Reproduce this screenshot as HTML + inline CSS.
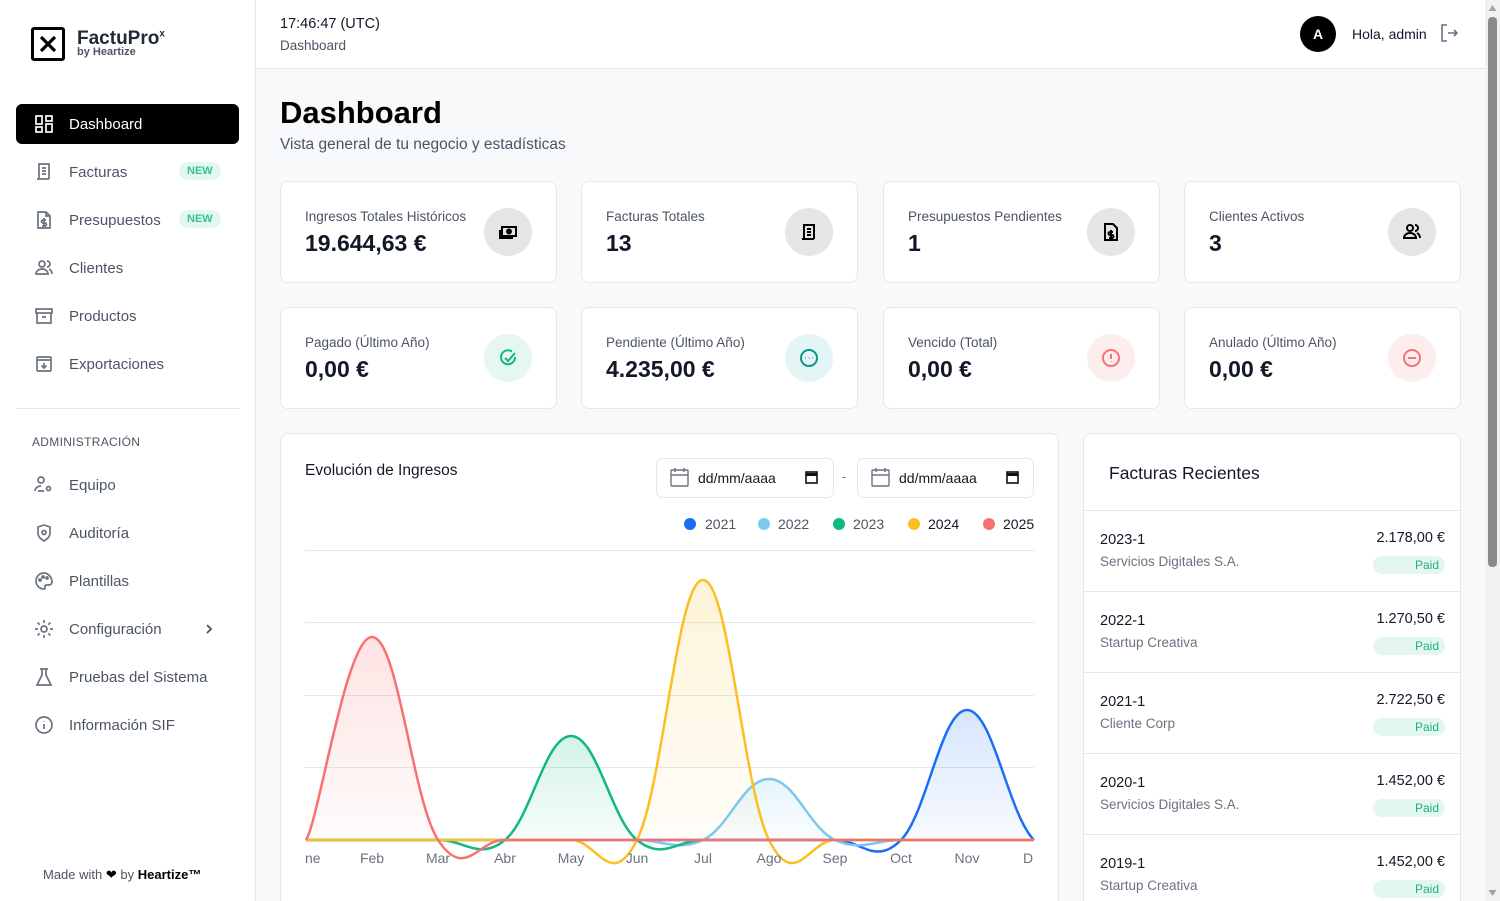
<!DOCTYPE html>
<html><head><meta charset="utf-8"><style>
*{box-sizing:border-box;margin:0;padding:0}
html{width:1500px;height:901px;overflow:hidden}
body{width:1500px;height:901px;overflow:hidden;background:#f8f9fb;font-family:"Liberation Sans",sans-serif;color:#1f2937;position:relative}
.abs{position:absolute}
.side{left:0;top:0;width:256px;height:901px;background:#fff;border-right:1px solid #e5e7eb}
.nav{position:absolute;left:16px;width:223px;height:40px;border-radius:6px;display:flex;align-items:center;padding-left:18px;font-size:15px;color:#4b5563}
.nav svg{width:20px;height:20px;margin-right:15px;stroke:#6b7280;fill:none;stroke-width:1.7}
.nav.act{background:#000;color:#fff}
.nav.act svg{stroke:#fff}
.new{position:absolute;left:163px;top:10px;background:#e3f7ee;color:#34c38f;font-size:11px;font-weight:bold;border-radius:10px;padding:3px 8px}
.card{position:absolute;background:#fff;border:1px solid #e5e7eb;border-radius:8px;width:277px;height:102px}
.card .l{position:absolute;left:24px;top:27px;font-size:13.5px;color:#4b5563}
.card .v{position:absolute;left:24px;top:48px;font-size:23px;font-weight:bold;color:#111827}
.card .ic{position:absolute;right:24px;top:26px;width:48px;height:48px;border-radius:50%;background:#e5e5e5;display:flex;align-items:center;justify-content:center}
.card .ic svg{width:20px;height:20px;fill:none;stroke-width:2}
.row{position:absolute;left:0;width:377px;height:81px;border-top:1px solid #e5e7eb}
.row .n{position:absolute;left:16px;top:21px;font-size:14.5px;color:#111827}
.row .c{position:absolute;left:16px;top:43px;font-size:13.5px;color:#6b7280}
.row .a{position:absolute;right:16px;top:19px;font-size:14.5px;color:#111827}
.row .p{position:absolute;right:16px;top:45px;width:72px;height:18px;border-radius:9px;background:#e3f7ee;color:#20b07c;font-size:12px;text-align:right;padding-right:6px;line-height:18px}
</style></head><body>

<div class="abs side">
 <div class="abs" style="left:31px;top:27px;width:34px;height:34px;border:3px solid #000;border-radius:3px"></div>
 <svg class="abs" style="left:31px;top:27px" width="34" height="34"><path d="M10 10L24 24M24 10L10 24" stroke="#000" stroke-width="3.2"/></svg>
 <div class="abs" style="left:77px;top:28px;font-size:19px;font-weight:bold;color:#1f2937">FactuPro<sup style="font-size:10px">x</sup></div>
 <div class="abs" style="left:77px;top:46px;font-size:11px;font-weight:bold;color:#4b5563">by Heartize</div>

 <div class="nav act" style="top:104px"><svg viewBox="0 0 20 20"><rect x="2" y="2" width="6" height="8"/><rect x="12" y="2" width="6" height="5"/><rect x="2" y="13" width="6" height="5"/><rect x="12" y="10" width="6" height="8"/></svg>Dashboard</div>
 <div class="nav" style="top:152px"><svg viewBox="0 0 20 20"><path d="M5 17V2h10v15M3 17h12M8 6h4M8 9h4M8 12h4"/></svg>Facturas<span class="new">NEW</span></div>
 <div class="nav" style="top:200px"><svg viewBox="0 0 20 20"><path d="M4 2h8l4 4v12H4zM12 2v4h4M10 8v8M12 10H9a1.5 1.5 0 000 3h2a1.5 1.5 0 010 3H8"/></svg>Presupuestos<span class="new">NEW</span></div>
 <div class="nav" style="top:248px"><svg viewBox="0 0 20 20"><circle cx="8" cy="6" r="3"/><path d="M2 16c0-3 3-5 6-5s6 2 6 5zM13 3a3 3 0 010 6M15 11c2 1 3 3 3 5"/></svg>Clientes</div>
 <div class="nav" style="top:296px"><svg viewBox="0 0 20 20"><rect x="2" y="3" width="16" height="4"/><path d="M3 7v10h14V7M8 11h4"/></svg>Productos</div>
 <div class="nav" style="top:344px"><svg viewBox="0 0 20 20"><rect x="3" y="3" width="14" height="14" rx="1"/><path d="M3 6h14M10 9v5M7.5 11.5L10 14l2.5-2.5"/></svg>Exportaciones</div>
 <div class="abs" style="left:16px;top:408px;width:223px;border-top:1px solid #e5e7eb"></div>
 <div class="abs" style="left:32px;top:435px;font-size:12px;color:#4b5563;letter-spacing:.3px">ADMINISTRACIÓN</div>
 <div class="nav" style="top:465px"><svg viewBox="0 0 20 20"><circle cx="7" cy="5" r="3"/><path d="M1 16c0-3 3-5 6-5M4 16h6"/><circle cx="14.5" cy="13.5" r="2"/></svg>Equipo</div>
 <div class="nav" style="top:513px"><svg viewBox="0 0 20 20"><path d="M10 2l6 2v6c0 4-3 6-6 8-3-2-6-4-6-8V4z"/><circle cx="10" cy="9.5" r="2"/></svg>Auditoría</div>
 <div class="nav" style="top:561px"><svg viewBox="0 0 20 20"><path d="M10 2a8 8 0 000 16c1 0 1.5-1 1-2s0-2 1.5-2H15a3 3 0 003-3c0-5-4-9-8-9z"/><circle cx="6" cy="9" r="1"/><circle cx="9" cy="6" r="1"/><circle cx="13" cy="7" r="1"/></svg>Plantillas</div>
 <div class="nav" style="top:609px"><svg viewBox="0 0 20 20"><circle cx="10" cy="10" r="3"/><path d="M10 1v3M10 16v3M1 10h3M16 10h3M3.6 3.6l2.1 2.1M14.3 14.3l2.1 2.1M3.6 16.4l2.1-2.1M14.3 5.7l2.1-2.1"/></svg>Configuración<svg style="position:absolute;left:186px;top:13px;width:14px;height:14px" viewBox="0 0 14 14"><path d="M5 3l4 4-4 4" stroke="#4b5563" stroke-width="1.8"/></svg></div>
 <div class="nav" style="top:657px"><svg viewBox="0 0 20 20"><path d="M6 2h8M8 2v6l-5 10h14l-5-10V2"/></svg>Pruebas del Sistema</div>
 <div class="nav" style="top:705px"><svg viewBox="0 0 20 20"><circle cx="10" cy="10" r="8"/><path d="M10 9v5M10 6v.5"/></svg>Información SIF</div>
 <div class="abs" style="left:43px;top:867px;font-size:13px;color:#4b5563">Made with <span style="color:#000">&#10084;</span> by <b style="color:#000">Heartize™</b></div>
</div>

<div class="abs" style="left:256px;top:0;width:1230px;height:69px;background:#fff;border-bottom:1px solid #e5e7eb"></div>
<div class="abs" style="left:280px;top:16px;font-size:14.5px;color:#111827">17:46:47 (UTC)</div>
<div class="abs" style="left:280px;top:38px;font-size:13.5px;color:#4b5563">Dashboard</div>
<div class="abs" style="left:1300px;top:16px;width:36px;height:36px;border-radius:50%;background:#000;color:#fff;font-weight:bold;font-size:14px;text-align:center;line-height:36px">A</div>
<div class="abs" style="left:1352px;top:26px;font-size:14px;color:#111827">Hola, admin</div>
<svg class="abs" style="left:1439px;top:23px" width="20" height="20" viewBox="0 0 20 20" fill="none" stroke="#6b7280" stroke-width="1.6"><path d="M8 2H3v16h5M9 10h9M15 7l3 3-3 3"/></svg>

<div class="abs" style="left:280px;top:95px;font-size:31px;font-weight:bold;color:#000">Dashboard</div>
<div class="abs" style="left:280px;top:136px;font-size:15.5px;color:#4b5563">Vista general de tu negocio y estadísticas</div>

<div class="card" style="left:280px;top:181px"><div class="l">Ingresos Totales Históricos</div><div class="v">19.644,63 €</div><div class="ic"><svg viewBox="0 0 20 20" stroke="#000"><rect x="4" y="5" width="14" height="9"/><circle cx="11" cy="9.5" r="2" fill="#000"/><path d="M2 8v8h13"/></svg></div></div>
<div class="card" style="left:581px;top:181px"><div class="l">Facturas Totales</div><div class="v">13</div><div class="ic"><svg viewBox="0 0 20 20" stroke="#000"><path d="M5 17V3h10v14M3 17h12M8 7h4M8 10h4M8 13h4"/></svg></div></div>
<div class="card" style="left:883px;top:181px"><div class="l">Presupuestos Pendientes</div><div class="v">1</div><div class="ic"><svg viewBox="0 0 20 20" stroke="#000"><path d="M4 2h8l4 4v12H4zM10 8v8M12 10H9a1.5 1.5 0 000 3h2a1.5 1.5 0 010 3H8"/></svg></div></div>
<div class="card" style="left:1184px;top:181px"><div class="l">Clientes Activos</div><div class="v">3</div><div class="ic"><svg viewBox="0 0 20 20" stroke="#000"><circle cx="8" cy="6" r="3"/><path d="M2 16c0-3 3-5 6-5s6 2 6 5zM13 3a3 3 0 010 6M15 11c2 1 3 3 3 5"/></svg></div></div>

<div class="card" style="left:280px;top:307px"><div class="l">Pagado (Último Año)</div><div class="v">0,00 €</div><div class="ic" style="background:#e6f7f0"><svg viewBox="0 0 20 20" stroke="#10b981"><path d="M17 9a7 7 0 11-3-5.5"/><path d="M7 10l3 3 7-8"/></svg></div></div>
<div class="card" style="left:581px;top:307px"><div class="l">Pendiente (Último Año)</div><div class="v">4.235,00 €</div><div class="ic" style="background:#e3f5f4"><svg viewBox="0 0 20 20" stroke="#0d9488"><circle cx="10" cy="10" r="8"/><path d="M6.5 10h.5M9.8 10h.5M13 10h.5"/></svg></div></div>
<div class="card" style="left:883px;top:307px"><div class="l">Vencido (Total)</div><div class="v">0,00 €</div><div class="ic" style="background:#fdeeee"><svg viewBox="0 0 20 20" stroke="#f87171"><circle cx="10" cy="10" r="8"/><path d="M10 6v5M10 13.5v.5"/></svg></div></div>
<div class="card" style="left:1184px;top:307px"><div class="l">Anulado (Último Año)</div><div class="v">0,00 €</div><div class="ic" style="background:#fdeeee"><svg viewBox="0 0 20 20" stroke="#f87171"><circle cx="10" cy="10" r="8"/><path d="M6 10h8"/></svg></div></div>

<div class="abs" style="left:280px;top:433px;width:779px;height:478px;background:#fff;border:1px solid #e5e7eb;border-radius:8px"></div>
<div class="abs" style="left:305px;top:462px;font-size:15.5px;color:#111827">Evolución de Ingresos</div>
<div class="abs" style="left:656px;top:458px;width:178px;height:40px;border:1px solid #e5e7eb;border-radius:6px;font-size:14px;color:#111827;padding:11px 0 0 41px">dd/mm/aaaa</div>
<div class="abs" style="left:857px;top:458px;width:177px;height:40px;border:1px solid #e5e7eb;border-radius:6px;font-size:14px;color:#111827;padding:11px 0 0 41px">dd/mm/aaaa</div>
<div class="abs" style="left:842px;top:469px;font-size:13px;color:#6b7280">-</div>
<svg class="abs" style="left:0;top:0" width="1500" height="901" fill="none">
 <g stroke="#6b7280" stroke-width="1.4"><rect x="671" y="470" width="17" height="16" rx="1"/><path d="M671 475h17M675 468v4M684 468v4"/><rect x="872" y="470" width="17" height="16" rx="1"/><path d="M872 475h17M876 468v4M885 468v4"/></g>
 <g stroke="#111" stroke-width="1.6"><rect x="806" y="472" width="11" height="11"/><path d="M806 474.5h11" stroke-width="3"/><rect x="1007" y="472" width="11" height="11"/><path d="M1007 474.5h11" stroke-width="3"/></g>
 <circle cx="690" cy="524" r="6" fill="#1a6ef5"/><circle cx="764" cy="524" r="6" fill="#7cc8ef"/><circle cx="839" cy="524" r="6" fill="#10b981"/><circle cx="914" cy="524" r="6" fill="#fbbf24"/><circle cx="989" cy="524" r="6" fill="#f87171"/>
 <g stroke="#e5e7eb"><path d="M305 550.5h729M305 622.5h729M305 695.5h729M305 767.5h729"/></g>
 <defs>
  <linearGradient id="gr" x1="0" y1="0" x2="0" y2="1"><stop offset="0" stop-color="#f87171" stop-opacity=".2"/><stop offset="1" stop-color="#f87171" stop-opacity=".03"/></linearGradient>
  <linearGradient id="gg" x1="0" y1="0" x2="0" y2="1"><stop offset="0" stop-color="#10b981" stop-opacity=".18"/><stop offset="1" stop-color="#10b981" stop-opacity=".03"/></linearGradient>
  <linearGradient id="gy" x1="0" y1="0" x2="0" y2="1"><stop offset="0" stop-color="#fbbf24" stop-opacity=".18"/><stop offset="1" stop-color="#fbbf24" stop-opacity=".03"/></linearGradient>
  <linearGradient id="gl" x1="0" y1="0" x2="0" y2="1"><stop offset="0" stop-color="#7cc8ef" stop-opacity=".2"/><stop offset="1" stop-color="#7cc8ef" stop-opacity=".03"/></linearGradient>
  <linearGradient id="gb" x1="0" y1="0" x2="0" y2="1"><stop offset="0" stop-color="#1a6ef5" stop-opacity=".18"/><stop offset="1" stop-color="#1a6ef5" stop-opacity=".03"/></linearGradient>
 </defs>
 <path d="M306 840C319 820 346 637 372 637C398 637 412 799 438 840Z" fill="url(#gr)"/>
 <path d="M505 840C531 819 545 736 571 736C597 736 611 819 637 840Z" fill="url(#gg)"/>
 <path d="M637 840C663 788 677 580 703 580C729 580 743 788 769 840Z" fill="url(#gy)"/>
 <path d="M703 840C729 828 743 779 769 779C795 779 809 828 835 840Z" fill="url(#gl)"/>
 <path d="M901 840C927 814 941 710 967 710C993 710 1008 814 1034 840Z" fill="url(#gb)"/>
 <g stroke-width="2.5">
 <path d="M306 840L835 840C861 840 875 866 901 840C927 814 941 710 967 710C993 710 1008 814 1034 840" stroke="#1a6ef5"/>
 <path d="M306 840L637 840C663 840 677 852 703 840C729 828 743 779 769 779C795 779 809 828 835 840C861 852 875 840 901 840L1034 840" stroke="#7cc8ef"/>
 <path d="M306 840L439 840C465 840 479 861 505 840C531 819 545 736 571 736C597 736 611 819 637 840C663 861 677 840 703 840L1034 840" stroke="#10b981"/>
 <path d="M306 840L571 840C597 840 611 892 637 840C663 788 677 580 703 580C729 580 743 788 769 840C795 892 809 840 835 840L1034 840" stroke="#fbbf24"/>
 <path d="M306 840C319 820 346 637 372 637C398 637 412 799 438 840C465 881 478 840 504 840L1034 840" stroke="#f87171"/>
 </g>
 <g font-family="Liberation Sans,sans-serif" font-size="14" fill="#6b7280" text-anchor="middle">
  <text x="305" y="863" text-anchor="start">ne</text><text x="372" y="863">Feb</text><text x="438" y="863">Mar</text><text x="505" y="863">Abr</text><text x="571" y="863">May</text><text x="637" y="863">Jun</text><text x="703" y="863">Jul</text><text x="769" y="863">Ago</text><text x="835" y="863">Sep</text><text x="901" y="863">Oct</text><text x="967" y="863">Nov</text><text x="1028" y="863">D</text>
 </g>
 <g font-family="Liberation Sans,sans-serif" font-size="14"><text x="705" y="529" fill="#4b5563">2021</text><text x="778" y="529" fill="#4b5563">2022</text><text x="853" y="529" fill="#4b5563">2023</text><text x="928" y="529" fill="#111827">2024</text><text x="1003" y="529" fill="#111827">2025</text></g>
</svg>

<div class="abs" style="left:1083px;top:433px;width:378px;height:478px;background:#fff;border:1px solid #e5e7eb;border-radius:8px;overflow:hidden">
 <div class="abs" style="left:25px;top:29px;font-size:17.5px;color:#111827">Facturas Recientes</div>
 <div class="row" style="top:76px"><div class="n">2023-1</div><div class="c">Servicios Digitales S.A.</div><div class="a">2.178,00 €</div><div class="p">Paid</div></div>
 <div class="row" style="top:157px"><div class="n">2022-1</div><div class="c">Startup Creativa</div><div class="a">1.270,50 €</div><div class="p">Paid</div></div>
 <div class="row" style="top:238px"><div class="n">2021-1</div><div class="c">Cliente Corp</div><div class="a">2.722,50 €</div><div class="p">Paid</div></div>
 <div class="row" style="top:319px"><div class="n">2020-1</div><div class="c">Servicios Digitales S.A.</div><div class="a">1.452,00 €</div><div class="p">Paid</div></div>
 <div class="row" style="top:400px"><div class="n">2019-1</div><div class="c">Startup Creativa</div><div class="a">1.452,00 €</div><div class="p">Paid</div></div>
</div>

<div class="abs" style="left:1485px;top:0;width:15px;height:901px;background:#f1f1f1"></div>
<div class="abs" style="left:1488px;top:17px;width:9px;height:550px;background:#8a8a8a;border-radius:4px"></div>
<svg class="abs" style="left:1485px;top:0" width="15" height="901"><path d="M3.5 11L7.5 5 11.5 11Z" fill="#a3a3a3"/><path d="M3.5 890L7.5 896 11.5 890Z" fill="#a3a3a3"/></svg>
</body></html>
